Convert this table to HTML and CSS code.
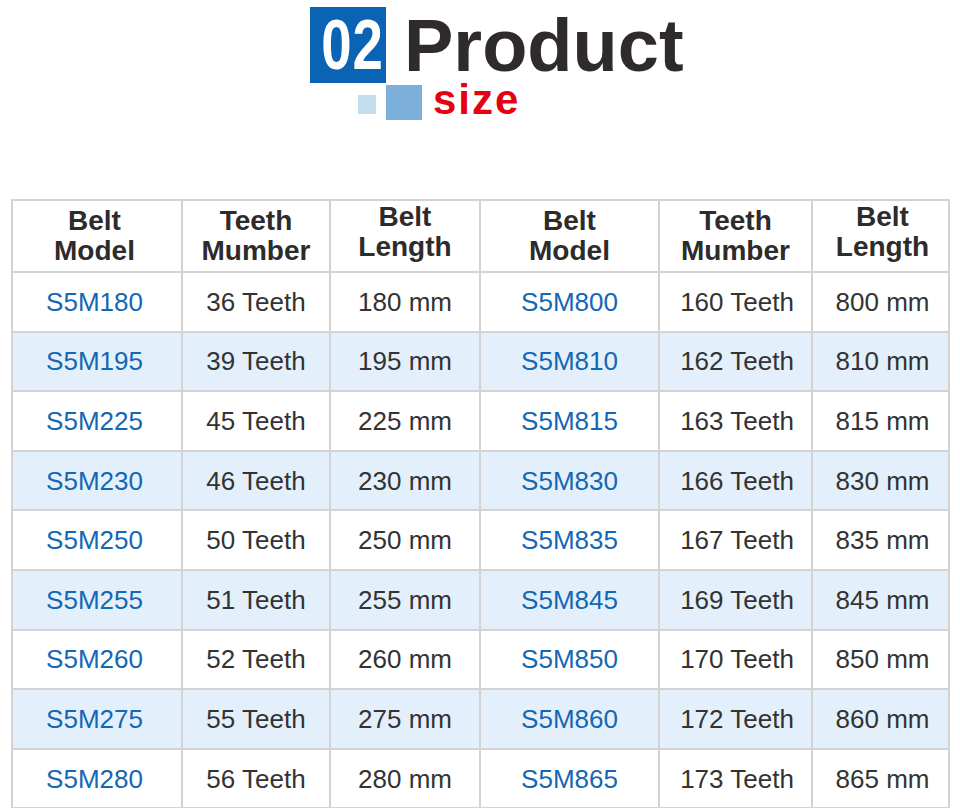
FILE: index.html
```html
<!DOCTYPE html>
<html lang="en">
<head>
<meta charset="utf-8">
<title>Product size</title>
<link rel="stylesheet" href="styles.css">
</head>
<body>
<header class="title">
  <div class="title-row">
    <div class="badge"><span class="badge-num">02</span></div>
    <h1 class="product">Product</h1>
  </div>
  <div class="title-row2">
    <span class="sq sq-light"></span>
    <span class="sq sq-mid"></span>
    <span class="size">size</span>
  </div>
</header>

<table class="spec">
  <colgroup>
    <col class="c1"><col class="c2"><col class="c3"><col class="c4"><col class="c5"><col class="c6">
  </colgroup>
  <thead>
    <tr class="head">
      <th class="first">Belt<br>Model</th>
      <th>Teeth<br>Mumber</th>
      <th class="up">Belt<br>Length</th>
      <th>Belt<br>Model</th>
      <th>Teeth<br>Mumber</th>
      <th class="up last">Belt<br>Length</th>
    </tr>
  </thead>
  <tbody>
    <tr><td class="model first">S5M180</td><td>36 Teeth</td><td>180 mm</td><td class="model">S5M800</td><td class="fifth">160 Teeth</td><td class="last">800 mm</td></tr>
    <tr class="alt"><td class="model first">S5M195</td><td>39 Teeth</td><td>195 mm</td><td class="model">S5M810</td><td class="fifth">162 Teeth</td><td class="last">810 mm</td></tr>
    <tr><td class="model first">S5M225</td><td>45 Teeth</td><td>225 mm</td><td class="model">S5M815</td><td class="fifth">163 Teeth</td><td class="last">815 mm</td></tr>
    <tr class="alt"><td class="model first">S5M230</td><td>46 Teeth</td><td>230 mm</td><td class="model">S5M830</td><td class="fifth">166 Teeth</td><td class="last">830 mm</td></tr>
    <tr><td class="model first">S5M250</td><td>50 Teeth</td><td>250 mm</td><td class="model">S5M835</td><td class="fifth">167 Teeth</td><td class="last">835 mm</td></tr>
    <tr class="alt"><td class="model first">S5M255</td><td>51 Teeth</td><td>255 mm</td><td class="model">S5M845</td><td class="fifth">169 Teeth</td><td class="last">845 mm</td></tr>
    <tr><td class="model first">S5M260</td><td>52 Teeth</td><td>260 mm</td><td class="model">S5M850</td><td class="fifth">170 Teeth</td><td class="last">850 mm</td></tr>
    <tr class="alt"><td class="model first">S5M275</td><td>55 Teeth</td><td>275 mm</td><td class="model">S5M860</td><td class="fifth">172 Teeth</td><td class="last">860 mm</td></tr>
    <tr><td class="model first">S5M280</td><td>56 Teeth</td><td>280 mm</td><td class="model">S5M865</td><td class="fifth">173 Teeth</td><td class="last">865 mm</td></tr>
  </tbody>
</table>
</body>
</html>
```
FILE: styles.css
```css
html, body {
  margin: 0;
  padding: 0;
  background: #ffffff;
}

body {
  font-family: "Liberation Sans", Arial, sans-serif;
  color: #333333;
  overflow: hidden;
}

/* ---------- Title ---------- */
.title {
  padding: 7px 0 0 310px;
  height: 199px;
  box-sizing: border-box;
}

.title-row {
  display: flex;
  align-items: flex-start;
}

.badge {
  width: 76px;
  height: 76px;
  background: #0b63b4;
  display: flex;
  align-items: center;
  justify-content: center;
}

.badge-num {
  display: inline-block;
  color: #ffffff;
  font-weight: bold;
  font-size: 71px;
  line-height: 76px;
  letter-spacing: 1px;
  transform: scaleX(0.77);
  transform-origin: 50% 50%;
  margin-left: 9px;
}

.product {
  margin: 1px 0 0 18px;
  font-size: 74px;
  line-height: 76px;
  font-weight: bold;
  color: #2f2b2b;
}

.title-row2 {
  display: flex;
  align-items: flex-start;
  padding-left: 48px;
}

.sq {
  display: block;
}

.sq-light {
  width: 18px;
  height: 19px;
  background: #c3dcee;
  margin-top: 11px;
}

.sq-mid {
  width: 36px;
  height: 35px;
  background: #7cb0da;
  margin-left: 10px;
  margin-top: 1px;
}

.size {
  margin: 2px 0 0 11px;
  font-size: 42px;
  line-height: 28px;
  font-weight: bold;
  letter-spacing: 2px;
  color: #e50012;
}

/* ---------- Table ---------- */
.spec {
  margin-left: 11px;
  border-collapse: collapse;
  table-layout: fixed;
  width: 939px;
  border: 2px solid #d3d3d3;
}

.c1 { width: 170px; }
.c2 { width: 148px; }
.c3 { width: 150px; }
.c4 { width: 179px; }
.c5 { width: 153px; }
.c6 { width: 137px; }

.spec th,
.spec td {
  border: 2px solid #d3d3d3;
  text-align: center;
  vertical-align: middle;
  padding: 0;
}

.spec .first {
  padding-right: 5px;
}

.spec .fifth {
  padding-left: 3px;
}

.spec .last {
  padding-left: 4px;
}

.spec th {
  font-size: 28px;
  line-height: 30px;
  font-weight: bold;
  color: #2e2b2b;
}

.spec th.up {
  padding-bottom: 8px;
}

.head {
  height: 72px;
}

.spec tbody tr {
  height: 59.6px;
}

.spec td {
  font-size: 26px;
  line-height: 30px;
  color: #333333;
}

.spec td.model {
  color: #1467b3;
}

.spec tr.alt td {
  background: #e3f0fb;
}
```
